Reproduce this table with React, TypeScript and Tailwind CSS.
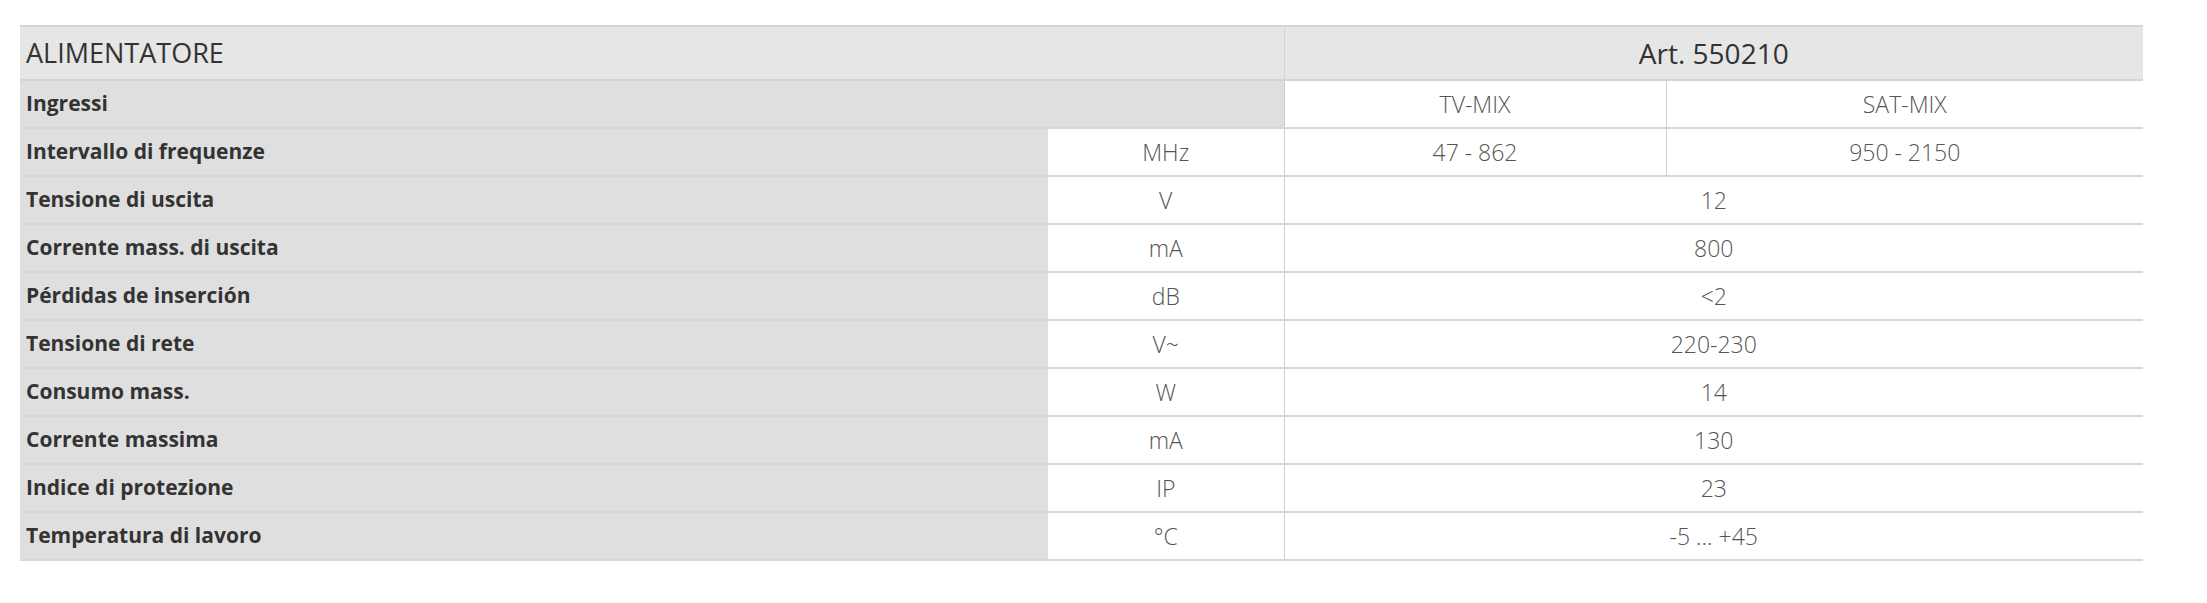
const rows: { label: string; unit: string; value?: string; tv?: string; sat?: string }[] = [
  { label: "Intervallo di frequenze", unit: "MHz", tv: "47 - 862", sat: "950 - 2150" },
  { label: "Tensione di uscita", unit: "V", value: "12" },
  { label: "Corrente mass. di uscita", unit: "mA", value: "800" },
  { label: "Pérdidas de inserción", unit: "dB", value: "<2" },
  { label: "Tensione di rete", unit: "V~", value: "220-230" },
  { label: "Consumo mass.", unit: "W", value: "14" },
  { label: "Corrente massima", unit: "mA", value: "130" },
  { label: "Indice di protezione", unit: "IP", value: "23" },
  { label: "Temperatura di lavoro", unit: "°C", value: "-5 ... +45" },
];

export default function App() {
  return (
    <div className="w-[2207px] h-[603px] bg-white pt-[25px] pl-[20px] font-['Open_Sans',sans-serif]">
      <table className="w-[2123px] table-fixed border-collapse">
        <colgroup>
          <col className="w-[1028px]" />
          <col className="w-[236px]" />
          <col className="w-[382px]" />
          <col className="w-[477px]" />
        </colgroup>
        <thead>
          <tr className="h-[54px] bg-[#e6e6e6] border-t-2 border-b-2 border-[#d4d4d4]">
            <th colSpan={2} className="text-left pl-[6px] text-[27px] font-normal text-[#333]">
              ALIMENTATORE
            </th>
            <th colSpan={2} className="text-center text-[28px] font-normal text-[#333] border-l border-[#d4d4d4]">
              Art. 550210
            </th>
          </tr>
        </thead>
        <tbody>
          <tr className="h-[48px] border-b-2 border-[#d8d8d8]">
            <td colSpan={2} className="bg-[#dfdfdf] pl-[6px] text-[21px] font-bold text-[#333]">
              Ingressi
            </td>
            <td className="text-center text-[23px] font-light text-[#555] border-l border-[#d0d0d0]">TV-MIX</td>
            <td className="text-center text-[23px] font-light text-[#555] border-l border-[#d0d0d0]">SAT-MIX</td>
          </tr>
          {rows.map((r) => (
            <tr key={r.label} className="h-[48px] border-b-2 border-[#d8d8d8]">
              <td className="bg-[#dfdfdf] pl-[6px] text-[21px] font-bold text-[#333]">{r.label}</td>
              <td className="text-center text-[23px] font-light text-[#555]">{r.unit}</td>
              {r.value ? (
                <td colSpan={2} className="text-center text-[23px] font-light text-[#555] border-l border-[#d0d0d0]">
                  {r.value}
                </td>
              ) : (
                <>
                  <td className="text-center text-[23px] font-light text-[#555] border-l border-[#d0d0d0]">{r.tv}</td>
                  <td className="text-center text-[23px] font-light text-[#555] border-l border-[#d0d0d0]">{r.sat}</td>
                </>
              )}
            </tr>
          ))}
        </tbody>
      </table>
    </div>
  );
}
